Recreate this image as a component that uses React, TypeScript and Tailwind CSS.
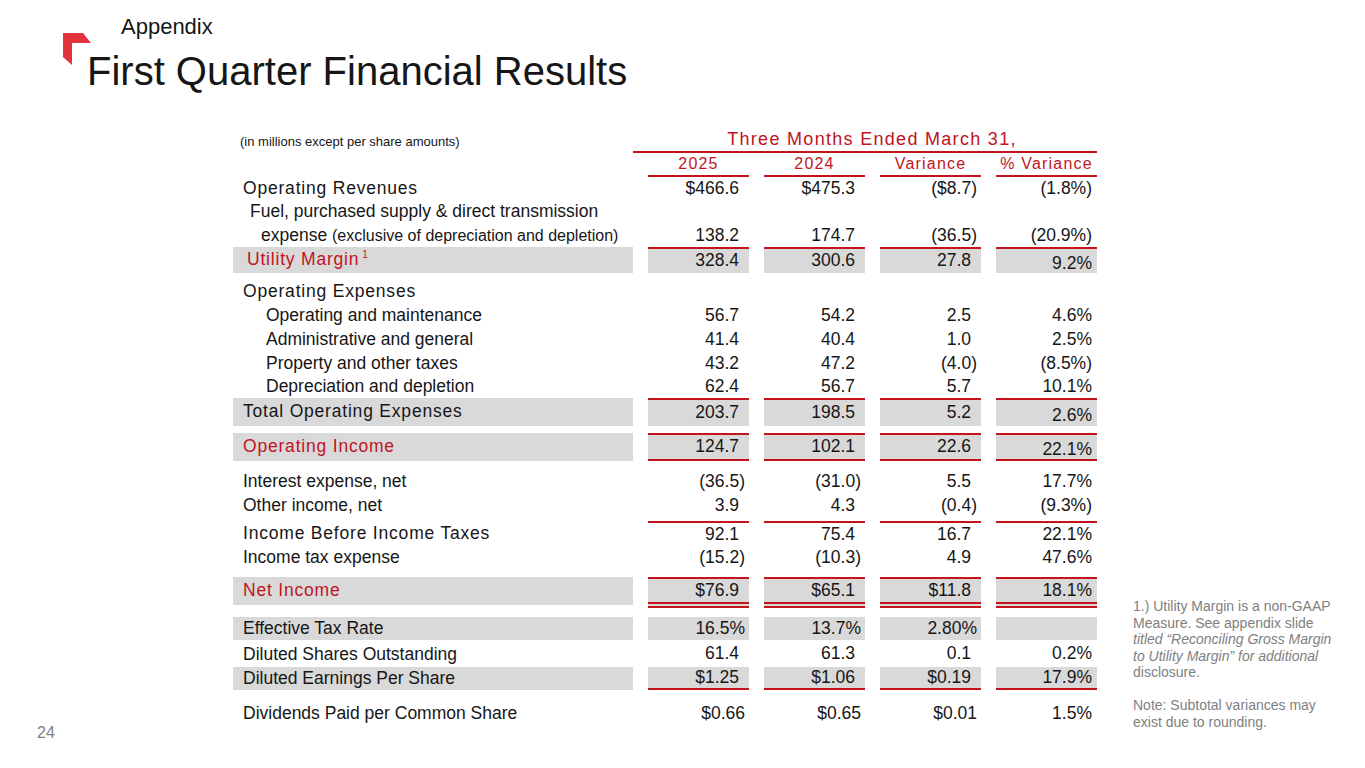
import React from 'react';

const RED_TEXT = 'text-[#c0141e]';

type RowProps = {
  label: React.ReactNode;
  values?: string[];
  h?: string;
  mt?: string;
  gray?: boolean;
  top?: boolean;
  bottom?: boolean;
  double?: boolean;
  flush?: boolean;
  shiftLast?: boolean;
  labelBox?: string;
};

function padFor(v: string, i: number, flush?: boolean) {
  if (i === 3) return 'pr-[5px]';
  if (flush || v.endsWith(')') || v.endsWith('%')) return 'pr-[4px]';
  return 'pr-[10px]';
}

function Row({ label, values = [], h = 'h-[24px]', mt = '', gray, top, bottom, double, flush, shiftLast, labelBox = '' }: RowProps) {
  return (
    <div className={`flex gap-[15px] ${h} ${mt}`}>
      <div className={`w-[400px] shrink-0 flex items-center ${gray ? 'bg-[#d9d9d9]' : ''} ${labelBox}`}>{label}</div>
      {[0, 1, 2, 3].map((i) => {
        const v = values[i] ?? '';
        return (
          <div
            key={i}
            className={`w-[101px] shrink-0 flex items-center justify-end ${padFor(v, i, flush)} ${gray ? 'bg-[#d9d9d9]' : ''} ${
              top ? 'border-t-2 border-t-[#c3141c]' : ''
            } ${bottom ? 'border-b-2 border-b-[#c3141c]' : ''} ${double ? 'border-b-[6px] border-double border-b-[#c3141c]' : ''} ${
              shiftLast && i === 3 ? 'pt-[5px]' : ''
            }`}
          >
            {v}
          </div>
        );
      })}
    </div>
  );
}

const lead = 'pl-[10px] tracking-[0.8px]';
const sub = 'pl-[33px]';
const plain = 'pl-[10px]';

function Logo() {
  return (
    <svg viewBox="0 0 28 32" className="mt-[33px] w-[28px] h-[32px] shrink-0">
      <polygon points="0,0 20,0 28,10 9,10 9,32 0,24" fill="#e2343c" />
    </svg>
  );
}

export default function App() {
  return (
    <div className="w-[1365px] h-[768px] bg-white overflow-hidden text-[#161616] font-['Liberation_Sans',Arial,sans-serif]">
      <div className="flex pl-[63px]">
        <Logo />
        <div className="-ml-[4px]">
          <div className="pl-[34px] pt-[16px] text-[22px] leading-none">Appendix</div>
          <h1 className="mt-[13px] text-[40px] leading-none">First Quarter Financial Results</h1>
        </div>
      </div>

      <div className="flex mt-[35px]">
        <div className="w-[233px] shrink-0">
          <div className="mt-[599px] pl-[37px] text-[16px] leading-none text-[#808080]">24</div>
        </div>

        <div className="w-[864px] shrink-0 text-[17.5px] leading-none">
          <div className="flex h-[27px]">
            <div className="w-[400px] shrink-0 flex items-center pl-[7px] pt-[3px] text-[13px]">
              (in millions except per share amounts)
            </div>
            <div className={`w-[464px] flex items-center justify-center pl-[14px] border-b-2 border-[#c3141c] text-[18px] tracking-[1.3px] ${RED_TEXT}`}>
              Three Months Ended March 31,
            </div>
          </div>

          <div className={`flex gap-[15px] h-[24px] text-[16px] tracking-[1.2px] ${RED_TEXT}`}>
            <div className="w-[400px] shrink-0" />
            {['2025', '2024', 'Variance', '% Variance'].map((t) => (
              <div key={t} className="w-[101px] shrink-0 flex items-center justify-center border-b-2 border-[#c3141c]">
                {t}
              </div>
            ))}
          </div>

          <Row h="h-[23px]" label={<span className={lead}>Operating Revenues</span>} values={['$466.6', '$475.3', '($8.7)', '(1.8%)']} />
          <Row label={<span className="pl-[17px]">Fuel, purchased supply &amp; direct transmission</span>} />
          <Row
            h="h-[23px]"
            label={
              <span className="pl-[28px]">
                expense <span className="text-[16px]">(exclusive of depreciation and depletion)</span>
              </span>
            }
            values={['138.2', '174.7', '(36.5)', '(20.9%)']}
          />
          <Row
            h="h-[26px]"
            gray
            top
            shiftLast
            label={
              <span className={`pl-[14px] tracking-[0.8px] ${RED_TEXT}`}>
                Utility Margin<span className="relative -top-[7px] ml-[3px] text-[10px] tracking-normal">1</span>
              </span>
            }
            values={['328.4', '300.6', '27.8', '9.2%']}
          />

          <Row mt="mt-[7px]" label={<span className={lead}>Operating Expenses</span>} />
          <Row label={<span className={sub}>Operating and maintenance</span>} values={['56.7', '54.2', '2.5', '4.6%']} />
          <Row label={<span className={sub}>Administrative and general</span>} values={['41.4', '40.4', '1.0', '2.5%']} />
          <Row label={<span className={sub}>Property and other taxes</span>} values={['43.2', '47.2', '(4.0)', '(8.5%)']} />
          <Row h="h-[22px]" label={<span className={sub}>Depreciation and depletion</span>} values={['62.4', '56.7', '5.7', '10.1%']} />
          <Row
            h="h-[28px]"
            gray
            top
            shiftLast
            label={<span className={lead}>Total Operating Expenses</span>}
            values={['203.7', '198.5', '5.2', '2.6%']}
          />
          <Row
            h="h-[28px]"
            mt="mt-[7px]"
            gray
            top
            bottom
            shiftLast
            label={<span className={`${lead} ${RED_TEXT}`}>Operating Income</span>}
            values={['124.7', '102.1', '22.6', '22.1%']}
          />

          <Row mt="mt-[9px]" label={<span className={plain}>Interest expense, net</span>} values={['(36.5)', '(31.0)', '5.5', '17.7%']} />
          <Row h="h-[23px]" label={<span className={plain}>Other income, net</span>} values={['3.9', '4.3', '(0.4)', '(9.3%)']} />
          <Row
            h="h-[25px]"
            mt="mt-[4px]"
            top
            label={<span className={lead}>Income Before Income Taxes</span>}
            values={['92.1', '75.4', '16.7', '22.1%']}
          />
          <Row label={<span className={plain}>Income tax expense</span>} values={['(15.2)', '(10.3)', '4.9', '47.6%']} />

          <Row
            h="h-[31px]"
            mt="mt-[7px]"
            gray
            top
            double
            labelBox="self-start h-[28px]"
            label={<span className={`${lead} ${RED_TEXT}`}>Net Income</span>}
            values={['$76.9', '$65.1', '$11.8', '18.1%']}
          />

          <Row h="h-[23px]" mt="mt-[9px]" gray label={<span className={plain}>Effective Tax Rate</span>} values={['16.5%', '13.7%', '2.80%', '']} />
          <Row h="h-[27px]" label={<span className={`${plain} pt-[3px]`}>Diluted Shares Outstanding</span>} values={['61.4', '61.3', '0.1', '0.2%']} />
          <Row
            h="h-[23px]"
            gray
            bottom
            label={<span className={plain}>Diluted Earnings Per Share</span>}
            values={['$1.25', '$1.06', '$0.19', '17.9%']}
          />
          <Row mt="mt-[12px]" flush label={<span className={plain}>Dividends Paid per Common Share</span>} values={['$0.66', '$0.65', '$0.01', '1.5%']} />
        </div>

        <div className="ml-[36px] mt-[472px] w-[225px] text-[14px] leading-[16.5px] text-[#808080] whitespace-nowrap">
          <p>
            1.) Utility Margin is a non-GAAP
            <br />
            Measure. See appendix slide
            <br />
            <i>titled “Reconciling Gross Margin</i>
            <br />
            <i>to Utility Margin” for additional</i>
            <br />
            disclosure.
          </p>
          <p className="mt-[16.5px]">
            Note: Subtotal variances may
            <br />
            exist due to rounding.
          </p>
        </div>
      </div>
    </div>
  );
}
